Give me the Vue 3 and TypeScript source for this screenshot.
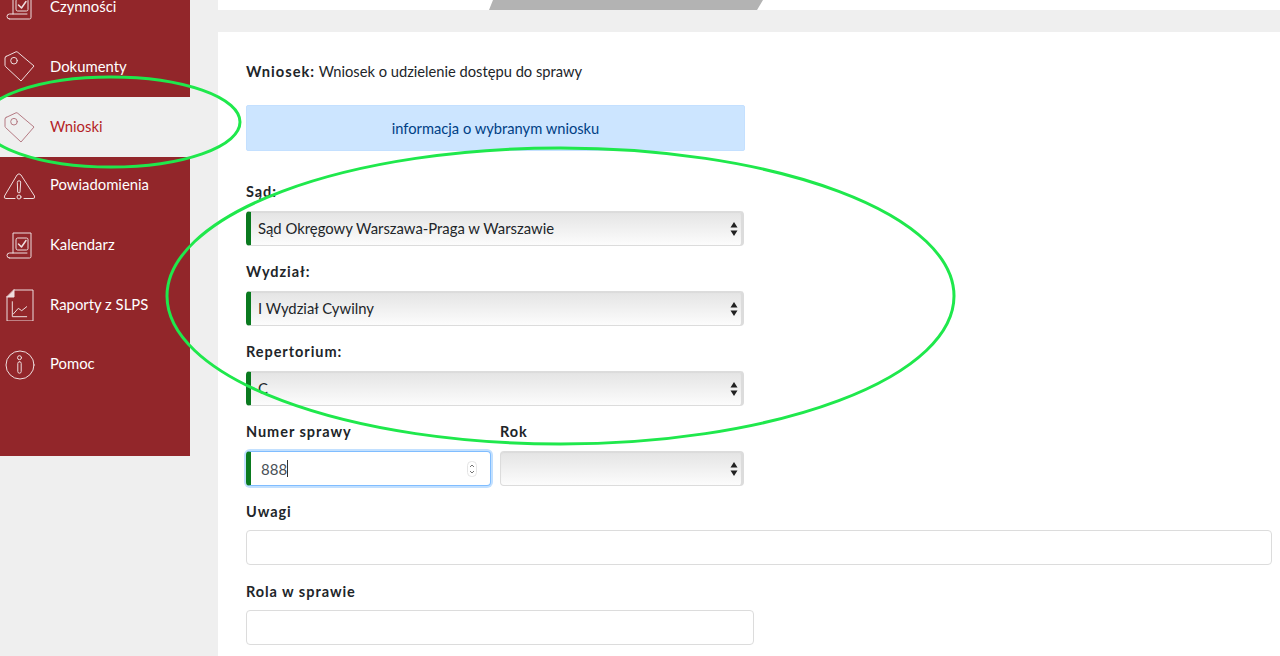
<script setup lang="ts">
interface NavItem { label: string; icon: string; active?: boolean; after?: boolean }
const nav: NavItem[] = [
  { label: 'Czynności', icon: 'scroll' },
  { label: 'Dokumenty', icon: 'tag' },
  { label: 'Wnioski', icon: 'tag', active: true },
  { label: 'Powiadomienia', icon: 'warn', after: true },
  { label: 'Kalendarz', icon: 'scroll', after: true },
  { label: 'Raporty z SLPS', icon: 'report', after: true },
  { label: 'Pomoc', icon: 'info', after: true },
]
const selects = [
  { label: 'Sąd:', value: 'Sąd Okręgowy Warszawa-Praga w Warszawie' },
  { label: 'Wydział:', value: 'I Wydział Cywilny' },
  { label: 'Repertorium:', value: 'C' },
]
</script>

<template>
  <div class="page">
    <aside class="sidebar">
      <a v-for="item in nav" :key="item.label" class="nav-item" :class="{ active: item.active, after: item.after }">
        <svg class="nav-icon" viewBox="0 0 32 32" fill="none" stroke="currentColor" stroke-width="1" stroke-linejoin="round" stroke-linecap="round">
          <template v-if="item.icon === 'scroll'">
            <path d="M10 24V4h18v23.500a1.500 1.500 0 0 1-1.500 1.500H6.500" />
            <path d="M24 24H6.500a2.500 2.500 0 0 0 0 5" />
            <path d="M13 10.500q0-1.500 1.500-1.500h9q1.500 0 1.500 1.500v9q0 1.500-1.500 1.500h-9q-1.500 0-1.500-1.500z" />
            <path d="M15.500 15l3 3 4.500-6.500" stroke-width="1.500" />
          </template>
          <template v-else-if="item.icon === 'tag'">
            <path d="M3 6.500L13 1.800q1-.3 1.800.5L31 16 18 31 2.500 16.500q-.5-.5-.5-1.200V8q0-1 1-1.500z" />
            <circle cx="11" cy="10.700" r="3.300" />
          </template>
          <template v-else-if="item.icon === 'warn'">
            <path d="M12 28.500H3q-2.500 0-1.500-2.500L14 5q2-2.500 4 0l13.500 21q1 2.500-1.500 2.500h-9" />
            <path d="M14.300 12q0-1.200 1.700-1.200t1.700 1.200l-.7 10.500q-1 .8-2 0z" />
            <circle cx="16" cy="27" r="2" />
          </template>
          <template v-else-if="item.icon === 'report'">
            <path d="M11 1h19v31H4V8" />
            <path d="M4 8h7V1z" fill="currentColor" />
            <path d="M9.300 12.700v15h14.400" />
            <path d="M10.300 25l5-5.700 3.400 2.400 5-4" />
          </template>
          <template v-else>
            <circle cx="17" cy="16" r="14" />
            <circle cx="16.500" cy="8.700" r="2" />
            <rect x="14.800" y="12.700" width="3.400" height="11.500" rx="1.700" />
          </template>
        </svg>
        <span>{{ item.label }}</span>
      </a>
    </aside>

    <main class="main">
      <div class="tabs"><div class="tab"></div></div>
      <section class="card">
        <p class="title"><b>Wniosek:</b> Wniosek o udzielenie dostępu do sprawy</p>
        <div class="info">informacja o wybranym wniosku</div>

        <div v-for="s in selects" :key="s.label" class="field narrow">
          <label>{{ s.label }}</label>
          <div class="select marked">
            <span class="select-value">{{ s.value }}</span>
            <svg class="arrows" viewBox="0 0 8 14"><path d="M4 0l3.500 5.500h-7zM4 14L.5 8.500h7z" /></svg>
          </div>
        </div>

        <div class="case-row narrow">
          <div class="field case-number">
            <label>Numer sprawy</label>
            <div class="number marked">
              <span class="num-value">888</span><i class="caret"></i>
              <svg class="spin" viewBox="0 0 10 16" fill="none" stroke="#777" stroke-width="1"><rect x=".5" y=".5" width="9" height="15" rx="4" stroke="#e4e4e4" /><path d="M3 6l2-2 2 2M3 10l2 2 2-2" /></svg>
            </div>
          </div>
          <div class="field case-year">
            <label>Rok</label>
            <div class="select">
              <span></span>
              <svg class="arrows" viewBox="0 0 8 14"><path d="M4 0l3.500 5.500h-7zM4 14L.5 8.500h7z" /></svg>
            </div>
          </div>
        </div>

        <div class="field wide plain">
          <label>Uwagi</label>
          <div class="text"></div>
        </div>
        <div class="field role plain">
          <label>Rola w sprawie</label>
          <div class="text"></div>
        </div>
      </section>
    </main>

    <svg class="marks" viewBox="0 0 1280 656" fill="none" stroke="#1fe84c" stroke-width="3">
      <ellipse cx="111" cy="122" rx="129" ry="45" />
      <ellipse cx="560.500" cy="296" rx="393.500" ry="148" />
    </svg>
  </div>
</template>

<style>
html, body { margin: 0; background: #efefef; overflow: hidden; }
</style>

<style scoped>
.page {
  position: relative;
  display: flex;
  align-items: flex-start;
  width: 1280px;
  height: 656px;
  overflow: hidden;
  background: #efefef;
  font-family: Lato, "Liberation Sans", sans-serif;
  color: #212529;
}
.sidebar {
  flex: none;
  width: 190px;
  height: 456px;
  background: #92262a;
  margin-right: 28px;
  overflow: hidden;
  box-sizing: border-box;
}
.nav-item {
  display: flex;
  align-items: center;
  height: 60px;
  gap: 15px;
  padding-left: 3px;
  color: #fff;
  font-size: 14.85px;
  box-sizing: border-box;
}
.nav-item:first-child { margin-top: -24px; }
.nav-item.active {
  margin-top: 1px;
  background: #efefef;
  color: #b41f27;
}
.nav-item.active span { margin-top: -2px; }
.nav-item.after {
  height: 59.67px;
  padding-bottom: 5px;
}
.nav-item.after .nav-icon { margin-top: 3px; }
.nav-item.active .nav-icon { color: #b57a83; opacity: 1; }
.nav-icon { flex: none; width: 32px; height: 32px; opacity: .85; }
.main { flex: 1; min-width: 0; }
.tabs { height: 10px; background: #fff; position: relative; overflow: hidden; }
.tab {
  position: absolute;
  left: 271px;
  width: 274px;
  top: 0;
  height: 10px;
  background: #b3b3b3;
  clip-path: polygon(4px 0, 100% 0, calc(100% - 6px) 100%, 0 100%);
}
.card {
  margin-top: 22px;
  height: 640px;
  background: #fff;
  padding: 29px 9px 0 28px;
  box-sizing: border-box;
}
.title {
  margin: 0;
  font-size: 14.7px;
  line-height: 20px;
}
.title b { letter-spacing: 1px; }
.info {
  width: 499px;
  height: 46px;
  margin-top: 24px;
  margin-bottom: 31px;
  box-sizing: border-box;
  background: #cce5ff;
  border: 1px solid #c4e0ff;
  border-radius: 2px;
  color: #004085;
  font-size: 14.7px;
  display: flex;
  align-items: center;
  justify-content: center;
  padding-bottom: 1px;
}
.field label {
  display: block;
  height: 20px;
  margin-bottom: 9px;
  font-size: 14.5px;
  line-height: 20px;
  font-weight: 700;
  letter-spacing: .95px;
}
.field { margin-bottom: 16px; }
.plain label { margin-bottom: 8px; }
.plain { margin-bottom: 17px; }
.narrow { width: 498px; }
.select, .number, .text {
  height: 35px;
  box-sizing: border-box;
  border: 1px solid #dcdcdc;
  border-radius: 4px;
}
.select {
  display: flex;
  align-items: center;
  justify-content: space-between;
  padding: 0 3px 0 7px;
  background: linear-gradient(#e4e4e4, #fcfcfc);
  font-size: 14.85px;
  border-right-width: 3px;
  box-shadow: inset 0 1px 1px rgba(0, 0, 0, .04);
}
.select-value { margin-top: -2px; }
.marked { border-left: 5px solid #0a7a1f; }
.arrows { width: 8px; height: 14px; fill: #222; }
.case-row { display: flex; gap: 9px; }
.case-number { width: 245px; flex: none; }
.case-year { width: 244px; flex: none; }
.number {
  display: flex;
  align-items: center;
  padding-left: 10px;
  background: #fff;
  border-top-color: #80bdff;
  border-right-color: #80bdff;
  border-bottom-color: #80bdff;
  border-left-color: #0a7a1f;
  box-shadow: 0 0 0 2px #c2e0ff;
  font-size: 15px;
  color: #495057;
  position: relative;
}
.caret { width: 1px; height: 17px; background: #333; }
.spin { position: absolute; right: 13px; top: 9px; width: 10px; height: 16px; }
.wide .text { width: 1026px; background: #fff; }
.role .text { width: 508px; background: #fff; }
.marks {
  position: absolute;
  left: 0;
  top: 0;
  width: 1280px;
  height: 656px;
  pointer-events: none;
}
</style>
